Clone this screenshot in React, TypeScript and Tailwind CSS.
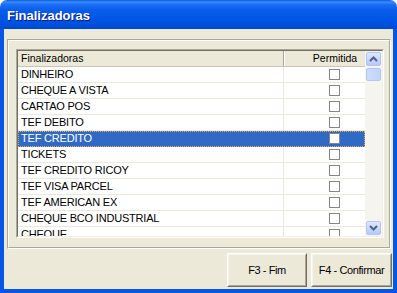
const items = [
  "DINHEIRO",
  "CHEQUE A VISTA",
  "CARTAO POS",
  "TEF DEBITO",
  "TEF CREDITO",
  "TICKETS",
  "TEF CREDITO RICOY",
  "TEF VISA PARCEL",
  "TEF AMERICAN EX",
  "CHEQUE BCO INDUSTRIAL",
  "CHEQUE",
];

function Chevron({ up }: { up: boolean }) {
  return (
    <svg width="9" height="6" viewBox="0 0 9 6">
      <path
        d={up ? "M1 5 L4.5 1.5 L8 5" : "M1 1 L4.5 4.5 L8 1"}
        fill="none"
        stroke="#4d6185"
        strokeWidth="2"
      />
    </svg>
  );
}

function ScrollBtn({ up }: { up: boolean }) {
  return (
    <div className="w-[15px] h-[14px] shrink-0 rounded-[2px] border border-[#b3c6f2] bg-[linear-gradient(to_bottom,#dce7fe,#c4d5fc_60%,#b6c9f8)] flex items-center justify-center">
      <Chevron up={up} />
    </div>
  );
}

function Box() {
  return <div className="w-[11px] h-[11px] border border-[#878787] bg-white" />;
}

function RaisedButton({ label, w }: { label: string; w: string }) {
  return (
    <div className={`${w} h-[34px] border border-t-white border-l-white border-b-[#716f64] border-r-[#716f64]`}>
      <div className="w-full h-full border border-t-[#f5f4ee] border-l-[#f5f4ee] border-b-[#aca899] border-r-[#aca899] flex items-center justify-center text-[11px] tracking-[-0.4px] text-black">
        {label}
      </div>
    </div>
  );
}

export default function App() {
  return (
    <div className="w-[397px] h-[293px] bg-white font-['Liberation_Sans',Arial,sans-serif]">
      <div className="w-full h-full flex flex-col rounded-t-[7px] overflow-hidden">
        <div className="h-[29px] shrink-0 flex items-center pl-[7px] pt-[2px] bg-[linear-gradient(to_bottom,#0a5ce0_0%,#3a8cfb_7%,#1a6ef6_16%,#0a5deb_35%,#0056e4_65%,#0050df_85%,#0046cf_100%)]">
          <span className="text-white font-bold text-[13px] [text-shadow:1px_1px_0_#0a1883]">Finalizadoras</span>
        </div>
        <div className="flex-1 flex flex-col bg-[#ece9d8] border-l-4 border-r-4 border-b-4 border-[#0756e6]">
          <div className="ml-[3px] mr-[2px] mt-[10px] h-[210px] border border-t-[#aca899] border-l-[#aca899] border-b-white border-r-white">
            <div className="w-full h-full border border-t-white border-l-white border-b-[#aca899] border-r-[#aca899] pl-[7px] pt-[8px]">
              <div className="w-[368px] h-[189px] border border-t-[#aca899] border-l-[#aca899] border-b-white border-r-white">
                <div className="w-full h-full border border-t-[#716f64] border-l-[#716f64] border-b-[#f1efe2] border-r-[#f1efe2] flex bg-white overflow-hidden">
                  <div className="w-[347px] h-full overflow-hidden leading-none text-black">
                    <div className="h-[16px] flex bg-[#ece9d8] border-b border-[#c9c5b4] text-[10.5px]">
                      <div className="w-[266px] shrink-0 border-r border-[#aca899] flex items-center pl-[3px]">Finalizadoras</div>
                      <div className="flex-1 overflow-hidden border-l border-white">
                        <div className="w-[100px] h-full flex items-center justify-center">Permitida</div>
                      </div>
                    </div>
                    {items.map((it, i) => {
                      const sel = i === 4;
                      return (
                        <div
                          key={it}
                          className={`h-[16px] flex border-b text-[11px] tracking-[-0.2px] ${sel ? "bg-[#316ac5] text-white border-[#316ac5] outline-1 outline-dotted outline-[#e3ab52] -outline-offset-1" : "border-[#ece9d8]"}`}
                        >
                          <div className={`w-[266px] shrink-0 border-r ${sel ? "border-[#316ac5]" : "border-[#ece9d8]"} flex items-center pl-[3px]`}>{it}</div>
                          <div className="flex-1 overflow-hidden">
                            <div className="w-[100px] h-full flex items-center justify-center">
                              <Box />
                            </div>
                          </div>
                        </div>
                      );
                    })}
                  </div>
                  <div className="w-[17px] h-full bg-[#f5f4ef] flex flex-col pl-[1px] pt-[1px] pb-[1px]">
                    <ScrollBtn up={true} />
                    <div className="w-[15px] h-[13px] mt-[2px] rounded-[2px] border border-[#b3c6f2] bg-[linear-gradient(to_right,#cddcfd,#c1d3fc)]" />
                    <div className="flex-1" />
                    <ScrollBtn up={false} />
                  </div>
                </div>
              </div>
            </div>
          </div>
          <div className="mt-[4px] flex justify-end gap-[4px] pr-[1px]">
            <RaisedButton label="F3 - Fim" w="w-[80px]" />
            <RaisedButton label="F4 - Confirmar" w="w-[81px]" />
          </div>
        </div>
      </div>
    </div>
  );
}
